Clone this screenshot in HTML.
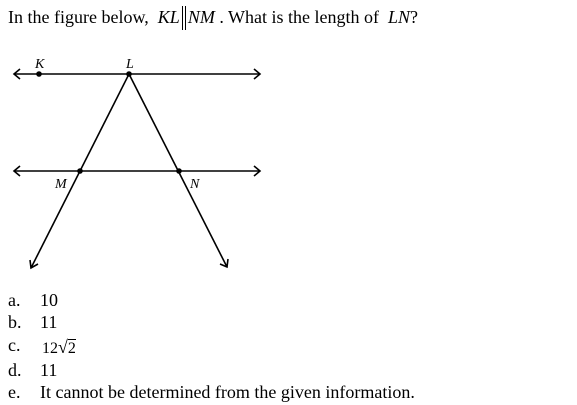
<!DOCTYPE html>
<html><head><style>
body{margin:0;width:577px;height:405px;background:#fff;font-family:"Liberation Serif",serif;color:#000;position:relative;overflow:hidden}
.t{position:absolute;font-size:18px;white-space:nowrap;line-height:1}
i{font-style:italic}
</style></head><body>
<div class="t" style="left:8px;top:6px">In the figure below, &nbsp;<i>KL</i><span style="display:inline-block;width:2px;height:24px;border-left:1.5px solid #000;border-right:1.5px solid #000;vertical-align:-7px;margin:0 2px"></span><i>NM</i> . What is the length of &nbsp;<i>LN</i>?</div>
<svg width="577" height="405" style="position:absolute;left:0;top:0" fill="none" stroke="#000" stroke-width="1.6">
<line x1="14" y1="74" x2="260" y2="74"/>
<polyline points="20,69 14,74 20,79"/><polyline points="254,69 260,74 254,79"/>
<line x1="14" y1="171" x2="260" y2="171"/>
<polyline points="20,166 14,171 20,176"/><polyline points="254,166 260,171 254,176"/>
<line x1="129" y1="74" x2="31" y2="268"/>
<line x1="129" y1="74" x2="227" y2="267"/>
<polyline points="30,260 31,268 38,264"/><polyline points="220,264 227,267 228,259"/>
<g fill="#000" stroke="none"><circle cx="39" cy="74" r="2.8"/><circle cx="129" cy="74" r="2.8"/><circle cx="80" cy="171" r="2.8"/><circle cx="179" cy="171" r="2.8"/></g>
<g fill="#000" stroke="none" font-family="Liberation Serif" font-style="italic" font-size="14">
<text x="35" y="68">K</text><text x="126" y="68">L</text><text x="55" y="188">M</text><text x="190" y="188">N</text></g>
</svg>
<div class="t" style="left:8px;top:291px">a.</div><div class="t" style="left:40px;top:291px">10</div>
<div class="t" style="left:8px;top:313px">b.</div><div class="t" style="left:40px;top:313px">11</div>
<div class="t" style="left:8px;top:336px">c.</div><div class="t" style="left:42px;top:338px;font-size:16px">12<span style="font-size:18px">√</span><span style="border-top:1px solid #000">2</span></div>
<div class="t" style="left:8px;top:361px">d.</div><div class="t" style="left:40px;top:361px">11</div>
<div class="t" style="left:8px;top:383px">e.</div><div class="t" style="left:40px;top:383px">It cannot be determined from the given information.</div>
</body></html>
